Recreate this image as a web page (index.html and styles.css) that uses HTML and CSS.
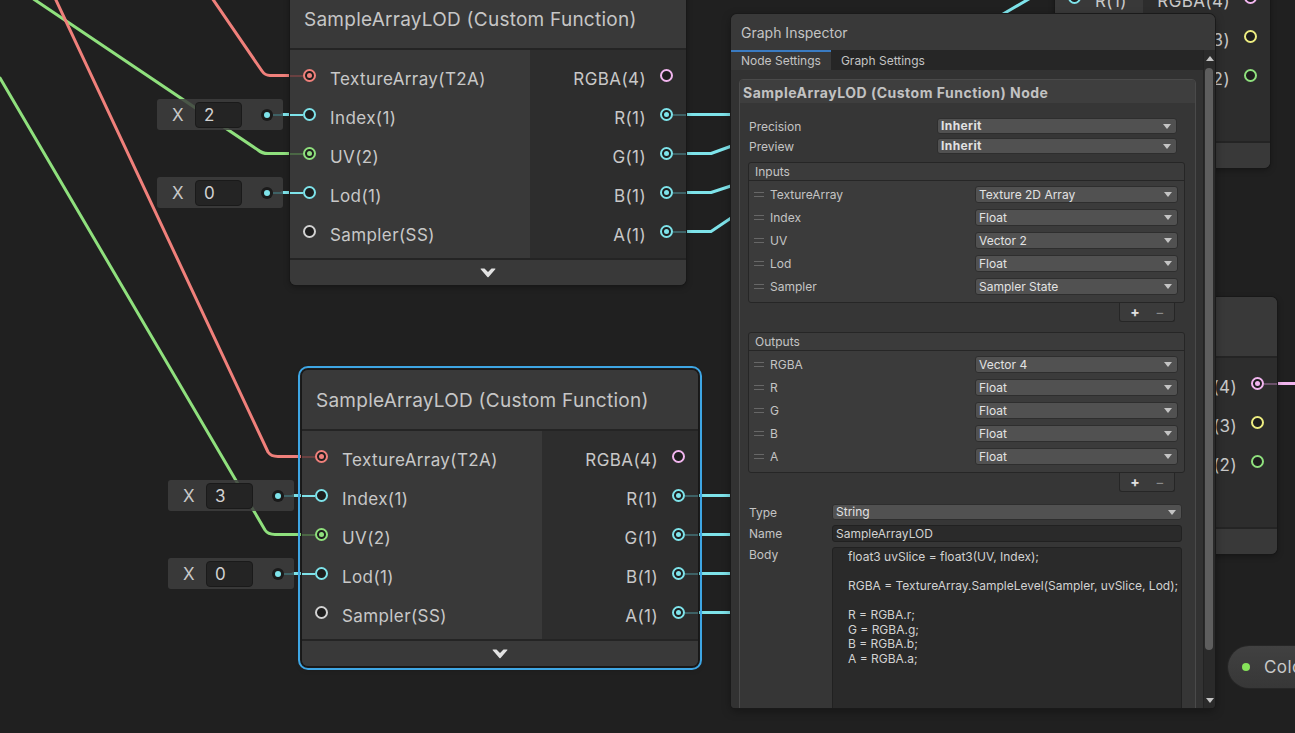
FILE: index.html
```html
<!DOCTYPE html>
<html>
<head>
<meta charset="utf-8">
<title>Shader Graph</title>
<link rel="stylesheet" href="styles.css">
</head>
<body>
<div class="canvas">
  <svg class="wires" width="1295" height="733" viewBox="0 0 1295 733">
    <g fill="none" stroke-width="3" stroke-linecap="round" stroke-linejoin="round">
      <path stroke="#f0807b" d="M212,-2 L262,71 Q265,75.5 270,75.5 L300,75.5"/>
      <path stroke="#8fe07d" d="M32,-2 L258,150 Q262,153.5 268,153.5 L300,153.5"/>
      <path stroke="#f0807b" d="M55,-2 L268,452 Q271,456.5 278,456.5 L310,456.5"/>
      <path stroke="#8fe07d" d="M0,78 L265,530 Q268,534.5 275,534.5 L310,534.5"/>
      <path stroke="#7ee3ea" d="M282,114.5 L300,114.5"/>
      <path stroke="#7ee3ea" d="M282,192.5 L300,192.5"/>
      <path stroke="#7ee3ea" d="M293,495.5 L310,495.5"/>
      <path stroke="#7ee3ea" d="M293,573.5 L310,573.5"/>
      <path stroke="#7ee3ea" d="M680,114.5 L740,114.5"/>
      <path stroke="#7ee3ea" d="M680,153.5 L711,153.5 L740,143"/>
      <path stroke="#7ee3ea" d="M680,192.5 L711,192.5 L740,183"/>
      <path stroke="#7ee3ea" d="M680,231.5 L711,231.5 L740,212"/>
      <path stroke="#7ee3ea" d="M690,495.5 L740,495.5"/>
      <path stroke="#7ee3ea" d="M690,534.5 L740,534.5"/>
      <path stroke="#7ee3ea" d="M690,573.5 L740,573.5"/>
      <path stroke="#7ee3ea" d="M690,612.5 L740,612.5"/>
      <path stroke="#7ee3ea" d="M998,17 L1034,-4"/>
      <path stroke="#f1b5ee" d="M1272,383.5 L1300,383.5"/>
    </g>
  </svg>

  <!-- Combine node (top right, behind inspector) -->
  <div class="node node-c node-c1">
    <div class="node-title">Combine</div>
    <div class="node-body">
      <div class="col-in">
        <div class="port-row in"><span class="stub cyan-m"></span><span class="port cyan on"></span><span class="plabel">R(1)</span></div>
        <div class="port-row in"><span class="stub cyan-m"></span><span class="port cyan on"></span><span class="plabel">G(1)</span></div>
        <div class="port-row in"><span class="stub cyan-m"></span><span class="port cyan on"></span><span class="plabel">B(1)</span></div>
        <div class="port-row in"><span class="stub cyan-m"></span><span class="port cyan on"></span><span class="plabel">A(1)</span></div>
      </div>
      <div class="col-out">
        <div class="port-row out"><span class="plabel">RGBA(4)</span><span class="port pink"></span><span class="stub"></span></div>
        <div class="port-row out"><span class="plabel">RGB(3)</span><span class="port yellow"></span><span class="stub"></span></div>
        <div class="port-row out"><span class="plabel">RG(2)</span><span class="port green"></span><span class="stub"></span></div>
      </div>
    </div>
    <div class="node-foot"><svg class="chev" width="16" height="10" viewBox="0 0 16 10"><path d="M0.5,1 Q0.5,0.5 1,0.5 H4.5 L8,4 L11.5,0.5 H15 Q15.5,0.5 15.5,1 L8.6,8.9 Q8,9.5 7.4,8.9 Z" fill="#e2e2e2"/></svg></div>
  </div>

  <!-- Combine node (middle right, behind inspector) -->
  <div class="node node-c node-c2">
    <div class="node-title">Combine</div>
    <div class="node-body">
      <div class="col-in">
        <div class="port-row in"><span class="stub cyan-m"></span><span class="port cyan on"></span><span class="plabel">R(1)</span></div>
        <div class="port-row in"><span class="stub cyan-m"></span><span class="port cyan on"></span><span class="plabel">G(1)</span></div>
        <div class="port-row in"><span class="stub cyan-m"></span><span class="port cyan on"></span><span class="plabel">B(1)</span></div>
        <div class="port-row in"><span class="stub cyan-m"></span><span class="port cyan on"></span><span class="plabel">A(1)</span></div>
      </div>
      <div class="col-out">
        <div class="port-row out"><span class="plabel">RGBA(4)</span><span class="port pink on"></span><span class="stub pink-m"></span></div>
        <div class="port-row out"><span class="plabel">RGB(3)</span><span class="port yellow"></span><span class="stub"></span></div>
        <div class="port-row out"><span class="plabel">RG(2)</span><span class="port green"></span><span class="stub"></span></div>
      </div>
    </div>
    <div class="node-foot"><svg class="chev" width="16" height="10" viewBox="0 0 16 10"><path d="M0.5,1 Q0.5,0.5 1,0.5 H4.5 L8,4 L11.5,0.5 H15 Q15.5,0.5 15.5,1 L8.6,8.9 Q8,9.5 7.4,8.9 Z" fill="#e2e2e2"/></svg></div>
  </div>

  <!-- Sample node 1 -->
  <div class="node node-s node-s1">
    <div class="node-title">SampleArrayLOD (Custom Function)</div>
    <div class="node-body">
      <div class="col-in">
        <div class="port-row in"><span class="stub red-m"></span><span class="port red on"></span><span class="plabel">TextureArray(T2A)</span></div>
        <div class="port-row in"><span class="stub cyan-b"></span><span class="port cyan"></span><span class="plabel">Index(1)</span></div>
        <div class="port-row in"><span class="stub green-m"></span><span class="port green on"></span><span class="plabel">UV(2)</span></div>
        <div class="port-row in"><span class="stub cyan-b"></span><span class="port cyan"></span><span class="plabel">Lod(1)</span></div>
        <div class="port-row in"><span class="stub"></span><span class="port white"></span><span class="plabel">Sampler(SS)</span></div>
      </div>
      <div class="col-out">
        <div class="port-row out"><span class="plabel">RGBA(4)</span><span class="port pink"></span><span class="stub"></span></div>
        <div class="port-row out"><span class="plabel">R(1)</span><span class="port cyan on"></span><span class="stub cyan-m"></span></div>
        <div class="port-row out"><span class="plabel">G(1)</span><span class="port cyan on"></span><span class="stub cyan-m"></span></div>
        <div class="port-row out"><span class="plabel">B(1)</span><span class="port cyan on"></span><span class="stub cyan-m"></span></div>
        <div class="port-row out"><span class="plabel">A(1)</span><span class="port cyan on"></span><span class="stub cyan-m"></span></div>
      </div>
    </div>
    <div class="node-foot"><svg class="chev" width="16" height="10" viewBox="0 0 16 10"><path d="M0.5,1 Q0.5,0.5 1,0.5 H4.5 L8,4 L11.5,0.5 H15 Q15.5,0.5 15.5,1 L8.6,8.9 Q8,9.5 7.4,8.9 Z" fill="#e2e2e2"/></svg></div>
  </div>

  <!-- Sample node 2 (selected) -->
  <div class="node node-s node-s2">
    <div class="node-title">SampleArrayLOD (Custom Function)</div>
    <div class="node-body">
      <div class="col-in">
        <div class="port-row in"><span class="stub red-m"></span><span class="port red on"></span><span class="plabel">TextureArray(T2A)</span></div>
        <div class="port-row in"><span class="stub cyan-b"></span><span class="port cyan"></span><span class="plabel">Index(1)</span></div>
        <div class="port-row in"><span class="stub green-m"></span><span class="port green on"></span><span class="plabel">UV(2)</span></div>
        <div class="port-row in"><span class="stub cyan-b"></span><span class="port cyan"></span><span class="plabel">Lod(1)</span></div>
        <div class="port-row in"><span class="stub"></span><span class="port white"></span><span class="plabel">Sampler(SS)</span></div>
      </div>
      <div class="col-out">
        <div class="port-row out"><span class="plabel">RGBA(4)</span><span class="port pink"></span><span class="stub"></span></div>
        <div class="port-row out"><span class="plabel">R(1)</span><span class="port cyan on"></span><span class="stub cyan-m"></span></div>
        <div class="port-row out"><span class="plabel">G(1)</span><span class="port cyan on"></span><span class="stub cyan-m"></span></div>
        <div class="port-row out"><span class="plabel">B(1)</span><span class="port cyan on"></span><span class="stub cyan-m"></span></div>
        <div class="port-row out"><span class="plabel">A(1)</span><span class="port cyan on"></span><span class="stub cyan-m"></span></div>
      </div>
    </div>
    <div class="node-foot"><svg class="chev" width="16" height="10" viewBox="0 0 16 10"><path d="M0.5,1 Q0.5,0.5 1,0.5 H4.5 L8,4 L11.5,0.5 H15 Q15.5,0.5 15.5,1 L8.6,8.9 Q8,9.5 7.4,8.9 Z" fill="#e2e2e2"/></svg></div>
  </div>

  <!-- inline value fields -->
  <div class="ifield if1"><span class="ifx">X</span><span class="ifv">2</span><span class="ifdot"></span><span class="ifstub"></span></div>
  <div class="ifield if2"><span class="ifx">X</span><span class="ifv">0</span><span class="ifdot"></span><span class="ifstub"></span></div>
  <div class="ifield if3"><span class="ifx">X</span><span class="ifv">3</span><span class="ifdot"></span><span class="ifstub"></span></div>
  <div class="ifield if4"><span class="ifx">X</span><span class="ifv">0</span><span class="ifdot"></span><span class="ifstub"></span></div>

  <!-- property pill -->
  <div class="pill"><span class="pill-dot"></span><span class="pill-label">Color</span></div>

  <!-- Graph Inspector window -->
  <div class="inspector">
    <div class="insp-title">Graph Inspector</div>
    <div class="insp-main">
      <div class="insp-left">
        <div class="tabs">
          <div class="tab active">Node Settings</div>
          <div class="tab">Graph Settings</div>
        </div>
        <div class="insp-content">
          <div class="panel">
            <div class="panel-header">SampleArrayLOD (Custom Function) Node</div>
            <div class="prop-grid">
              <span class="lbl">Precision</span><div class="dd bold"><span>Inherit</span><span class="arr"></span></div>
              <span class="lbl">Preview</span><div class="dd bold"><span>Inherit</span><span class="arr"></span></div>
            </div>

            <div class="list">
              <div class="list-head">Inputs</div>
              <div class="list-body">
                <div class="list-row"><span class="handle"></span><span class="lbl">TextureArray</span><div class="dd ldd"><span>Texture 2D Array</span><span class="arr"></span></div></div>
                <div class="list-row"><span class="handle"></span><span class="lbl">Index</span><div class="dd ldd"><span>Float</span><span class="arr"></span></div></div>
                <div class="list-row"><span class="handle"></span><span class="lbl">UV</span><div class="dd ldd"><span>Vector 2</span><span class="arr"></span></div></div>
                <div class="list-row"><span class="handle"></span><span class="lbl">Lod</span><div class="dd ldd"><span>Float</span><span class="arr"></span></div></div>
                <div class="list-row"><span class="handle"></span><span class="lbl">Sampler</span><div class="dd ldd"><span>Sampler State</span><span class="arr"></span></div></div>
              </div>
            </div>
            <div class="list-foot"><span class="plus">+</span><span class="minus">&minus;</span></div>

            <div class="list list-out">
              <div class="list-head">Outputs</div>
              <div class="list-body">
                <div class="list-row"><span class="handle"></span><span class="lbl">RGBA</span><div class="dd ldd"><span>Vector 4</span><span class="arr"></span></div></div>
                <div class="list-row"><span class="handle"></span><span class="lbl">R</span><div class="dd ldd"><span>Float</span><span class="arr"></span></div></div>
                <div class="list-row"><span class="handle"></span><span class="lbl">G</span><div class="dd ldd"><span>Float</span><span class="arr"></span></div></div>
                <div class="list-row"><span class="handle"></span><span class="lbl">B</span><div class="dd ldd"><span>Float</span><span class="arr"></span></div></div>
                <div class="list-row"><span class="handle"></span><span class="lbl">A</span><div class="dd ldd"><span>Float</span><span class="arr"></span></div></div>
              </div>
            </div>
            <div class="list-foot"><span class="plus">+</span><span class="minus">&minus;</span></div>

            <div class="fields">
              <span class="lbl">Type</span><div class="dd"><span>String</span><span class="arr"></span></div>
              <span class="lbl">Name</span><div class="tfield">SampleArrayLOD</div>
              <span class="lbl lbl-top">Body</span><div class="tarea">float3 uvSlice = float3(UV, Index);

RGBA = TextureArray.SampleLevel(Sampler, uvSlice, Lod);

R = RGBA.r;
G = RGBA.g;
B = RGBA.b;
A = RGBA.a;</div>
            </div>
          </div>
        </div>
      </div>
      <div class="scrollbar">
        <div class="sb-btn"><span class="tri-up"></span></div>
        <div class="sb-track"><div class="sb-thumb"></div></div>
        <div class="sb-btn"><span class="tri-down"></span></div>
      </div>
    </div>
  </div>
</div>
</body>
</html>
```

FILE: styles.css
```css
* { box-sizing: border-box; }
html, body { margin: 0; padding: 0; background: #202020; }
body { font-family: Inter, "Noto Sans", "Liberation Sans", sans-serif; }

.canvas {
  position: relative;
  width: 1295px;
  height: 733px;
  overflow: hidden;
  background: #202020;
}
.wires { position: absolute; left: 0; top: 0; }

/* ---------- graph nodes ---------- */
.node {
  position: absolute;
  width: 396px;
  border-radius: 6px;
  overflow: hidden;
  background: #393939;
  box-shadow: 0 0 0 1px #181818, 0 2px 6px rgba(0, 0, 0, 0.35);
}
.node-s1 { left: 290px; top: -11px; }
.node-s2 { left: 302px; top: 370px; outline: 2px solid #3ea6e4; outline-offset: 2px; }
.node-c { width: 215px; }
.node-c1 { left: 1055px; top: -89px; }
.node-c2 { left: 1062px; top: 297px; }

.node-title {
  height: 61px;
  display: flex;
  align-items: center;
  padding-left: 14px;
  padding-top: 1px;
  font-size: 19px;
  letter-spacing: 0.25px;
  color: #c6c6c6;
  background: #393939;
  border-bottom: 2px solid #242424;
  white-space: nowrap;
}
.node-body { display: flex; }
.col-in { width: 240px; background: #393939; padding: 6px 0 7px; }
.node-c .col-in { width: 88px; }
.col-out { flex: 1; background: #2d2d2d; padding: 6px 0 7px; }
.port-row { height: 39px; display: flex; align-items: center; }
.port-row.out { justify-content: flex-end; }
.stub { width: 13px; height: 2px; flex: none; }
.port {
  width: 13px;
  height: 13px;
  flex: none;
  border: 2px solid currentColor;
  border-radius: 50%;
  background: #1e1e1e;
  display: flex;
  align-items: center;
  justify-content: center;
}
.port.on::after {
  content: "";
  width: 5px;
  height: 5px;
  border-radius: 50%;
  background: currentColor;
}
.plabel {
  font-size: 17px;
  letter-spacing: 0.4px;
  line-height: 20px;
  padding-top: 6px;
  color: #c8c8c8;
  white-space: nowrap;
}
.in .plabel { margin-left: 14px; }
.out .plabel { margin-right: 14px; }
.node-foot {
  height: 27px;
  border-top: 2px solid #242424;
  background: #393939;
  display: flex;
  align-items: center;
  justify-content: center;
}
.chev { display: block; }

.red { color: #f0807b; }
.green { color: #8fe07d; }
.cyan { color: #7ee3ea; }
.pink { color: #f1b5ee; }
.yellow { color: #ecec80; }
.white { color: #d2d2d2; }
.red-m { background: #6a4141; }
.green-m { background: #4b6745; }
.cyan-m { background: #3e6266; }
.cyan-b { background: #7ee3ea; }
.pink-m { background: #6b516a; }

/* ---------- inline value fields ---------- */
.ifield {
  position: absolute;
  width: 126px;
  height: 31px;
  display: flex;
  align-items: center;
  background: rgba(62, 62, 62, 0.85);
  border-radius: 3px;
  font-size: 17px;
  color: #c8c8c8;
}
.ifx { margin-left: 15px; width: 12px; }
.ifv {
  margin-left: 11px;
  width: 47px;
  height: 26px;
  background: #242424;
  border: 1px solid #1a1a1a;
  border-radius: 4px;
  padding-left: 8px;
  line-height: 24px;
  color: #d2d2d2;
}
.ifdot {
  margin-left: auto;
  width: 12px;
  height: 12px;
  border-radius: 50%;
  background: #1a1a1a;
  display: flex;
  align-items: center;
  justify-content: center;
}
.ifdot::after {
  content: "";
  width: 6px;
  height: 6px;
  border-radius: 50%;
  background: #7ee3ea;
}
.ifstub { width: 10px; height: 2px; background: #3e6266; }
.if1 { left: 157px; top: 99px; }
.if2 { left: 157px; top: 177px; }
.if3 { left: 168px; top: 480px; }
.if4 { left: 168px; top: 558px; }

/* ---------- property pill ---------- */
.pill {
  position: absolute;
  left: 1228px;
  top: 646px;
  width: 130px;
  height: 42px;
  border-radius: 21px;
  background: linear-gradient(#414141, #373737);
  box-shadow: 0 0 0 1px #262626;
  display: flex;
  align-items: center;
}
.pill-dot {
  margin-left: 14px;
  width: 8px;
  height: 8px;
  border-radius: 50%;
  background: #86e35a;
}
.pill-label { margin-left: 14px; font-size: 17px; letter-spacing: 0.4px; color: #c8c8c8; }

/* ---------- inspector ---------- */
.inspector {
  position: absolute;
  left: 731px;
  top: 14px;
  width: 484px;
  height: 694px;
  background: #323232;
  border-radius: 6px 6px 4px 4px;
  box-shadow: 0 0 0 1px #1a1a1a, 0 3px 10px rgba(0, 0, 0, 0.35);
  overflow: hidden;
  display: flex;
  flex-direction: column;
  font-size: 12px;
  color: #c4c4c4;
}
.insp-title {
  height: 36px;
  flex: none;
  padding-left: 10px;
  display: flex;
  align-items: center;
  font-size: 14px;
  background: #393939;
  color: #c4c4c4;
}
.insp-main { flex: 1; display: flex; min-height: 0; }
.insp-left { flex: 1; display: flex; flex-direction: column; min-width: 0; }
.tabs { height: 20px; flex: none; display: flex; background: #262626; }
.tab {
  padding: 0 10px;
  line-height: 18px;
  border-top: 2px solid transparent;
  color: #c4c4c4;
}
.tab.active { background: #383838; border-top-color: #3a7bc2; }
.insp-content {
  flex: 1;
  min-height: 0;
  overflow: hidden;
  padding: 9px 7px 0 8px;
  background: #323232;
}
.panel {
  border: 1px solid #4a4a4a;
  border-radius: 4px;
  background: #363636;
  display: flex;
  flex-direction: column;
}
.panel-header {
  height: 23px;
  padding: 2px 0 0 3px;
  display: flex;
  align-items: center;
  font-size: 14px;
  font-weight: 700;
  letter-spacing: 0.5px;
  color: #c2c2c2;
  background: #3e3e3e;
  border-radius: 3px 3px 0 0;
  white-space: nowrap;
}
.lbl { color: #c4c4c4; white-space: nowrap; }
.prop-grid {
  margin-top: 13px;
  padding-left: 9px;
  display: grid;
  grid-template-columns: 188px 240px;
  grid-auto-rows: 20px;
  align-items: center;
}
.dd {
  height: 16px;
  display: flex;
  align-items: center;
  justify-content: space-between;
  background: #515151;
  border: 1px solid #2e2e2e;
  border-radius: 3px;
  padding-left: 3px;
  color: #e2e2e2;
  font-size: 12px;
  line-height: 14px;
  white-space: nowrap;
}
.dd.bold { font-weight: 700; letter-spacing: 0.4px; }
.arr {
  width: 0;
  height: 0;
  margin-right: 5px;
  border-left: 4px solid transparent;
  border-right: 4px solid transparent;
  border-top: 5px solid #c4c4c4;
}

.list {
  margin: 6px 10px 0 8px;
  background: #3b3b3b;
  border: 1px solid #262626;
  border-radius: 3px;
}
.list-out { margin-top: 10px; }
.list-head {
  height: 18px;
  padding-left: 6px;
  line-height: 17px;
  border-bottom: 1px solid #262626;
  color: #c4c4c4;
}
.list-body { padding: 2px 0 4px; }
.list-row { height: 23px; display: flex; align-items: center; }
.handle {
  width: 10px;
  height: 5px;
  margin-left: 5px;
  border-top: 1px solid #676767;
  border-bottom: 1px solid #676767;
  flex: none;
}
.list-row .lbl { margin-left: 6px; }
.ldd { width: 203px; height: 17px; margin-left: auto; margin-right: 6px; }
.list-foot {
  align-self: flex-end;
  margin-right: 20px;
  width: 56px;
  height: 19px;
  padding-left: 8px;
  display: flex;
  align-items: center;
  gap: 11px;
  background: #3b3b3b;
  border: 1px solid #262626;
  border-top: none;
  border-radius: 0 0 3px 3px;
}
.list-foot span { width: 14px; height: 18px; text-align: center; line-height: 18px; font-size: 14px; }
.plus { color: #e0e0e0; font-weight: 700; }
.minus { color: #8a8a8a; }

.fields {
  margin-top: 12px;
  padding-left: 9px;
  display: grid;
  grid-template-columns: 83px 350px;
  row-gap: 5px;
  align-items: center;
}
.lbl-top { align-self: start; line-height: 16px; }
.tfield {
  height: 17px;
  background: #2a2a2a;
  border: 1px solid #212121;
  border-radius: 3px;
  padding-left: 3px;
  line-height: 15px;
  color: #d2d2d2;
}
.tarea {
  height: 210px;
  background: #2a2a2a;
  border: 1px solid #212121;
  border-radius: 3px;
  padding: 2px 0 0 15px;
  line-height: 14.5px;
  white-space: pre;
  color: #d2d2d2;
  overflow: hidden;
}

.scrollbar {
  width: 12px;
  flex: none;
  display: flex;
  flex-direction: column;
  background: #2a2a2a;
  border-left: 1px solid #232323;
}
.sb-btn { height: 16px; flex: none; display: flex; align-items: center; justify-content: center; }
.tri-up {
  width: 0; height: 0;
  border-left: 4px solid transparent;
  border-right: 4px solid transparent;
  border-bottom: 5px solid #c4c4c4;
}
.tri-down {
  width: 0; height: 0;
  border-left: 4px solid transparent;
  border-right: 4px solid transparent;
  border-top: 5px solid #c4c4c4;
}
.sb-track { flex: 1; padding: 2px 2px 0 1px; }
.sb-thumb { height: 582px; background: #5e5e5e; border-radius: 4px; }
```
